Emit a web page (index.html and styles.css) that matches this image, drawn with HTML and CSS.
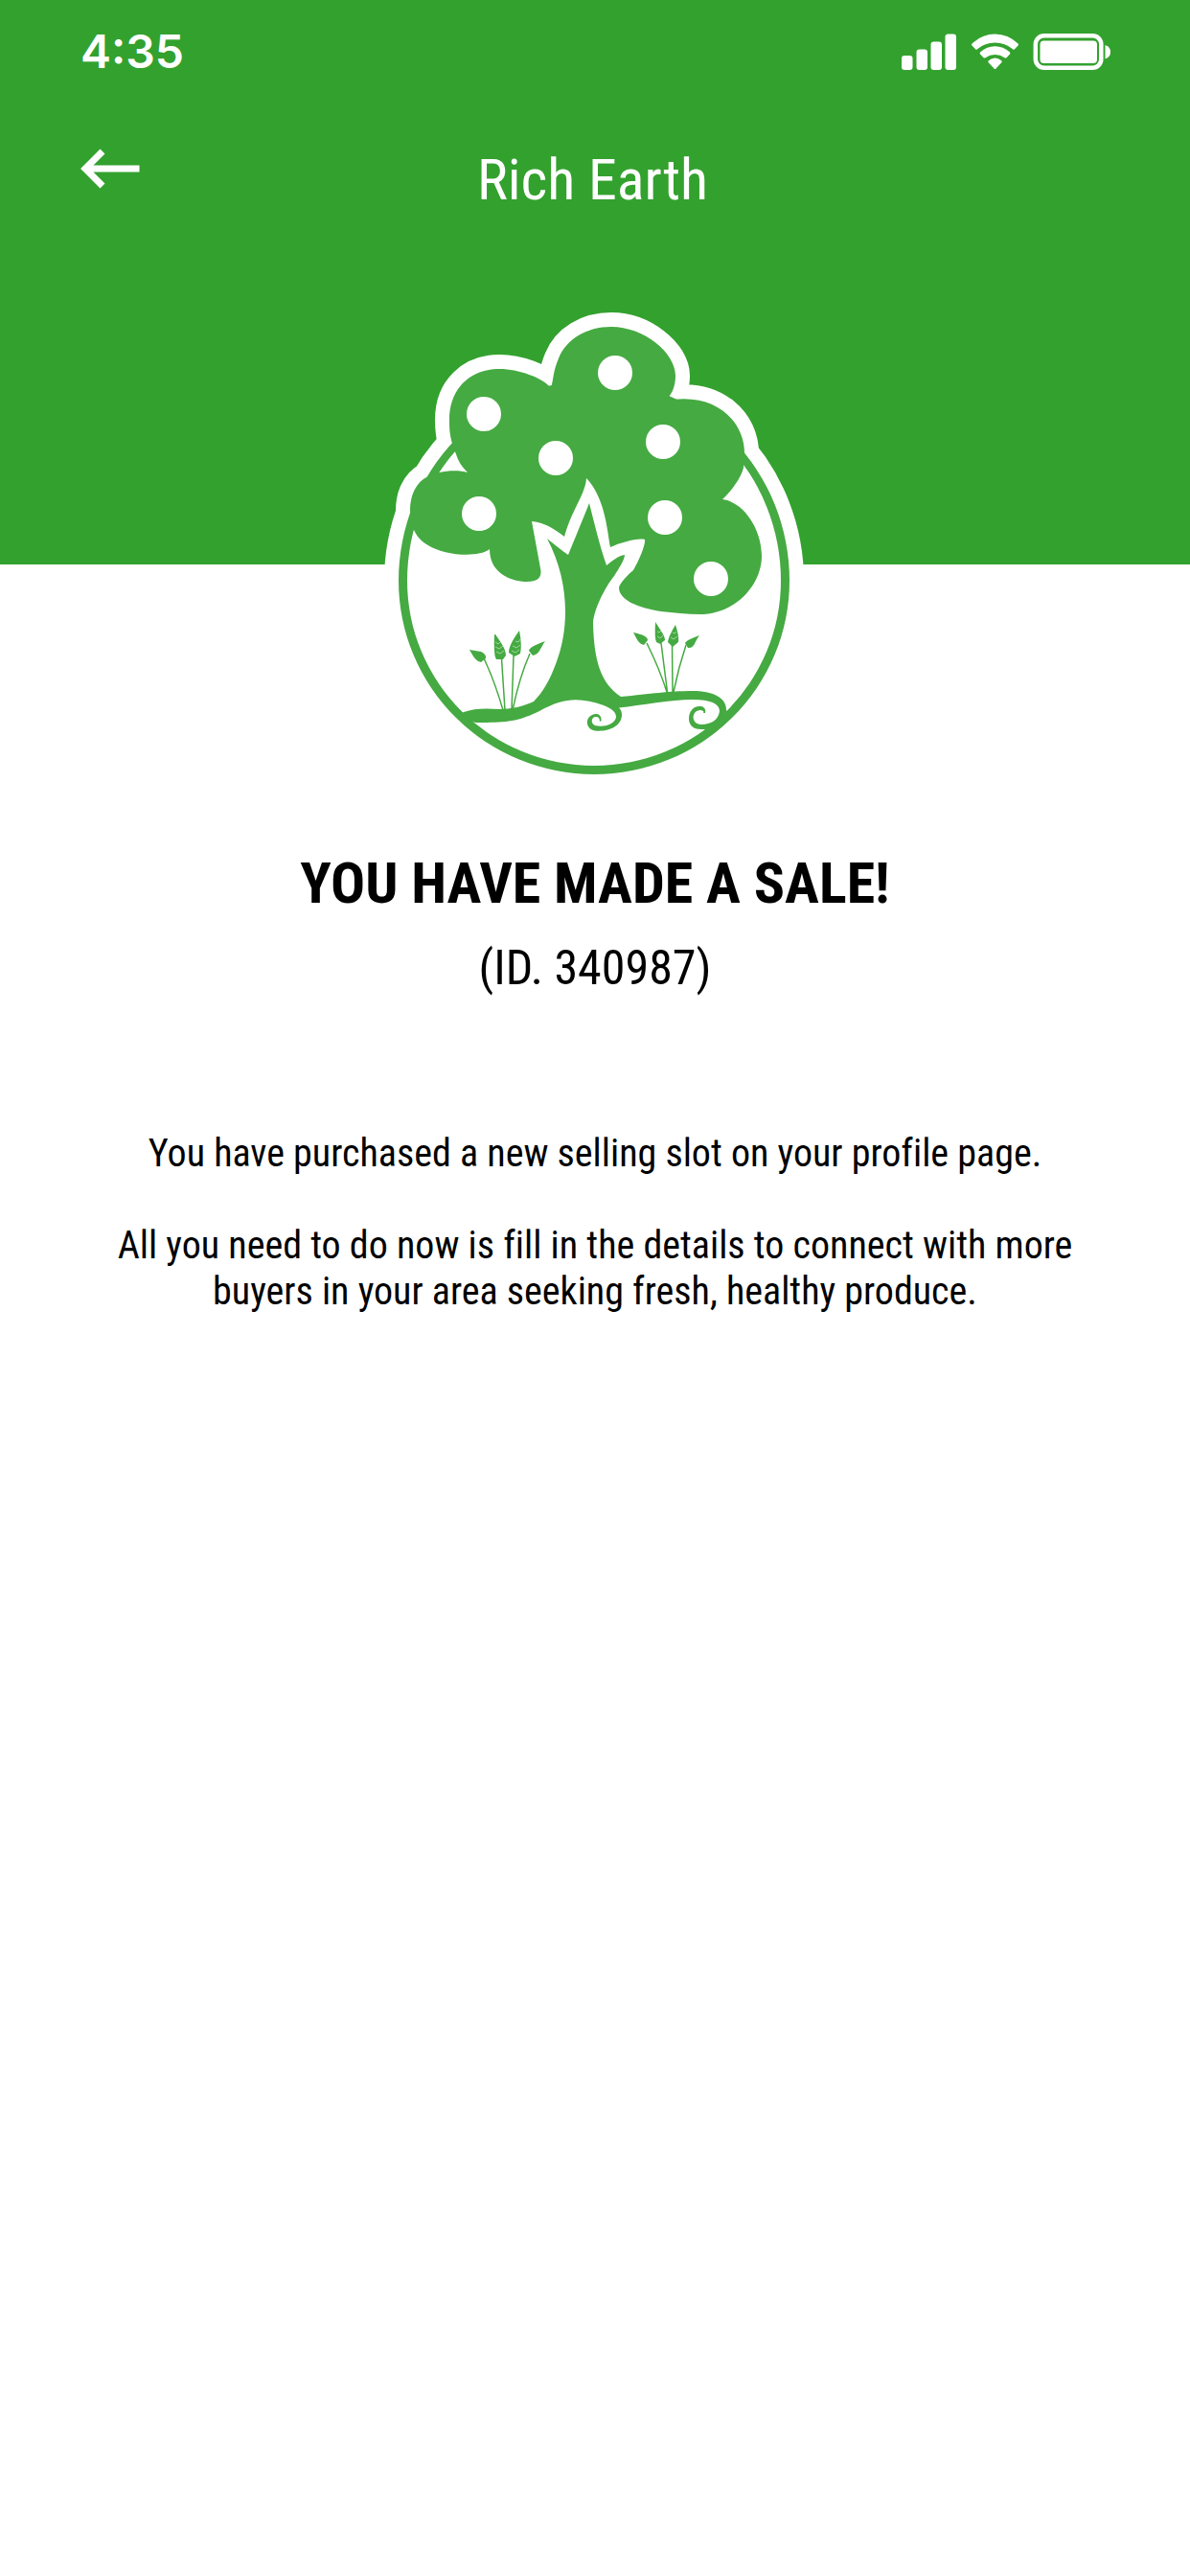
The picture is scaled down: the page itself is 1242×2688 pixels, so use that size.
FILE: index.html
```html
<!DOCTYPE html>
<html lang="en">
<head>
<meta charset="utf-8">
<meta name="viewport" content="width=device-width, initial-scale=1">
<title>Rich Earth</title>
<link rel="stylesheet" href="styles.css">
</head>
<body>
<header class="header">
  <div class="status">
    <span class="status-time">4:35</span>
    <svg class="status-icons" viewBox="940 35 219 39" fill="#fff" role="img" aria-label="Signal, Wi-Fi, battery full">
      <rect x="941" y="58" width="11.500" height="15" rx="3"/>
      <rect x="956.500" y="51.500" width="11.500" height="21.500" rx="3"/>
      <rect x="971.500" y="43.500" width="11.500" height="29.500" rx="3"/>
      <rect x="986.500" y="35.500" width="11.500" height="37.500" rx="3"/>
      <path d="M1014.500 45.500Q1025 35.500 1038.500 35.500Q1052 35.500 1062.500 45.500Q1063.500 46.500 1062.500 47.500L1059 51.300Q1058 52.300 1057 51.300Q1049 44.500 1038.500 44.500Q1028 44.500 1020 51.300Q1019 52.300 1018 51.300L1014.500 47.500Q1013.500 46.500 1014.500 45.500Z"/>
      <path d="M1023 54.500Q1030 48.300 1038.500 48.300Q1047 48.300 1054 54.500Q1054.800 55.500 1054 56.500L1050.500 60.200Q1049.500 61 1048.500 60.200Q1044 57 1038.500 57Q1033 57 1028.500 60.200Q1027.500 61 1026.500 60.200L1023 56.500Q1022.200 55.500 1023 54.500Z"/>
      <path d="M1031.500 63.500Q1038.500 57.500 1045.500 63.500Q1046 64.500 1045.300 65.300L1039.500 71.500Q1038.500 72.500 1037.500 71.500L1031.700 65.300Q1031 64.500 1031.500 63.500Z"/>
      <rect x="1080.800" y="37.300" width="68.500" height="33.500" rx="9" fill="none" stroke="#fff" stroke-width="4.500"/>
      <rect x="1085.500" y="42.500" width="59.500" height="23.500" rx="4"/>
      <path d="M1153.500 47Q1159 49 1159 54.300Q1159 59.600 1153.500 61.600Z"/>
    </svg>
  </div>
  <nav class="bar">
    <button class="back" type="button" aria-label="Back">
      <svg class="back-icon" viewBox="0 0 62 48" fill="none" stroke="#fff" stroke-width="7" aria-hidden="true">
        <path d="M23 6L5 24L23 42M6 24H61.500"/>
      </svg>
    </button>
    <h1 class="title">Rich Earth</h1>
  </nav>
</header>
<main class="main">
  <svg class="logo" viewBox="391 316 460 500" role="img" aria-label="Rich Earth tree logo">
    <defs>
      <path id="leaves" d="M472 463C469 452 469 446 469 438C469 405 491 385 522 385C540 385 567 394 575 405C578 395 577 388 583 374C591 354 612 341 638 341C672 341 705 368 705 392C705 402 702 410 697 415L702 417C748 411 777 440 777 473L776 488C774 497 765 511 754 521C777 524 795 553 795 580C795 611 767 641 730 641C717 641 703 639 690 638C665 634 646 626 646 613C647 608 656 599 661 595C667 585 674 568 673 563C666 561 648 566 637 571C634 556 632 520 612 499C611 516 596 533 589 560C580 553 569 545 555 544L564 593C566 602 562 607 550 607C538 607 511 601 511 573C501 583 444 582 432 553L428 533C428 520 432 504 447 497C455 492 476 489 488 493C482 487 478 481 476 474Z"/>
      <path id="egg" d="M416 606A204 209 0 0 1 824 606A204 202 0 0 1 416 606Z"/>
    </defs>
    <g fill="#fff" stroke="#fff" stroke-width="30" stroke-linejoin="round">
      <use href="#egg"/>
      <use href="#leaves"/>
    </g>
    <path fill="#45aa42" fill-rule="evenodd" d="M416 606A204 209 0 0 1 824 606A204 202 0 0 1 416 606ZM425 606A195 193 0 0 0 815 606A195 202 0 0 0 425 606Z"/>
    <g fill="#45aa42">
      <use href="#leaves"/>
      <path d="M615 525C609 540 600 562 593 579C586 574 577 567 571 562C594 605 595 655 580 693C574 709 567 722 557 732C547 737 533 740 521 740C506 739 495 739 484 743L478 747L496 754C530 754 540 753 563 742C590 727 606 728 630 736C640 740 643 744 643 748C643 754 632 760 621 757C616 755 617 748 622 748C625 748 626 750 626 753L627.500 752C628 747 625 745 622 745C610 746 610 761 621 762.500C636 764 649 757 649 746C649 743 648 740 646 738.500C670 736 700 730 723 730C741 730 751 734 751 742C750 751 742 756 732 756C720 755 722 741 731 741C734 741 735 743 734 744L736 744C737 740 735 737 730 737C723 737 719 743 719 750C719 758 725 761 732 761L740 761L762 740L758 742C759 728 744 721 723 721C697 721 680 724 648 727C627 713 620 690 619 650C620 635 632 612 641 601C646 593 652 584 652 579C645 580 638 586 633 590C626 570 620 545 615 525Z"/>
      <path d="M490 678L502 680Q508 683 507 687L502 691C496 690 493 683 490 678ZM517 662C522 669 528 677 528 684L525 688L518 688Q515 684 516 662ZM542 658Q545 672 543 682L537 685L531 681C531 674 537 665 542 658ZM569 669C564 676 563 683 556 684L552 679Q552 675 569 669Z"/>
      <path d="M661 660Q676 663 676 668L672 673C666 672 664 665 661 660ZM684 649C689 657 694 663 694 668L689 672L685 670Q683 666 684 649ZM705 652Q709 664 708 670L702 675L697 670C698 664 702 657 705 652ZM730 663C725 669 725 677 718 676L715 671Q716 668 730 663Z"/>
    </g>
    <g fill="none" stroke="#45aa42" stroke-width="1.500">
      <path d="M505 687Q516 710 525 741M523.500 687L527 741M536 684L534 741M553 682Q542 707 535 741M675 671Q688 697 696 722M690 671L696.500 722M701.500 673L702 722M716 673Q708 697 703 722"/>
    </g>
    <g fill="none" stroke="#fff" stroke-width="0.500">
      <path d="M517 670L520 672L522 670M517 675L521 677L525 674M518 680L522 682L526 679M538 669L541 670L543 667M535 674L539 676L543 673M534 679L538 681L542 678M686 659L688 660L690 658M686 664L689 666L692 663M702 660L704 661L706 659M700 665L703 667L707 664"/>
    </g>
    <g fill="#fff">
      <circle cx="505" cy="432" r="18"/>
      <circle cx="580" cy="478" r="18"/>
      <circle cx="500" cy="536" r="18"/>
      <circle cx="642" cy="389" r="18"/>
      <circle cx="692" cy="461" r="18"/>
      <circle cx="694" cy="540" r="18"/>
      <circle cx="742" cy="604" r="18"/>
    </g>
  </svg>
  <h2 class="heading">YOU HAVE MADE A SALE!</h2>
  <p class="order-id">(ID. 340987)</p>
  <div class="message">
    <p>You have purchased a new selling slot on your profile page.</p>
    <p>All you need to do now is fill in the details to connect with more buyers in your area seeking fresh, healthy produce.</p>
  </div>
</main>
</body>
</html>
```

FILE: styles.css
```css
* {
  box-sizing: border-box;
}

body {
  margin: 0;
  background: #fff;
  color: #000;
  font-family: "Roboto Condensed", Roboto, sans-serif;
  font-variant-ligatures: none;
}

h1,
h2,
p {
  margin: 0;
}

.header {
  padding: 24px 83px 365px 84px;
  background: #33a12e;
  color: #fff;
}

.status {
  display: flex;
  align-items: center;
  justify-content: space-between;
}

.status-time {
  font: 600 48px/60px Inter, sans-serif;
}

.status-icons {
  width: 219px;
  height: 39px;
}

.bar {
  display: grid;
  grid-template-columns: 62px 1fr 68px;
  align-items: start;
  margin-top: 68px;
}

.back {
  display: block;
  padding: 0;
  border: 0;
  background: none;
}

.back-icon {
  display: block;
  width: 62px;
  height: 48px;
}

.title {
  font-size: 60px;
  font-weight: 400;
  line-height: 72px;
  text-align: center;
}

.main {
  display: flex;
  flex-direction: column;
  align-items: center;
  padding: 0 96px 96px;
  text-align: center;
}

.logo {
  width: 460px;
  height: 500px;
  margin-top: -273px;
}

.heading {
  margin-top: 70px;
  font-size: 60px;
  font-weight: 700;
  line-height: 72px;
}

.order-id {
  margin-top: 22px;
  font-size: 50px;
  line-height: 60px;
}

.message {
  display: grid;
  gap: 48px;
  margin-top: 140px;
  font-size: 40px;
  line-height: 48px;
}
```
